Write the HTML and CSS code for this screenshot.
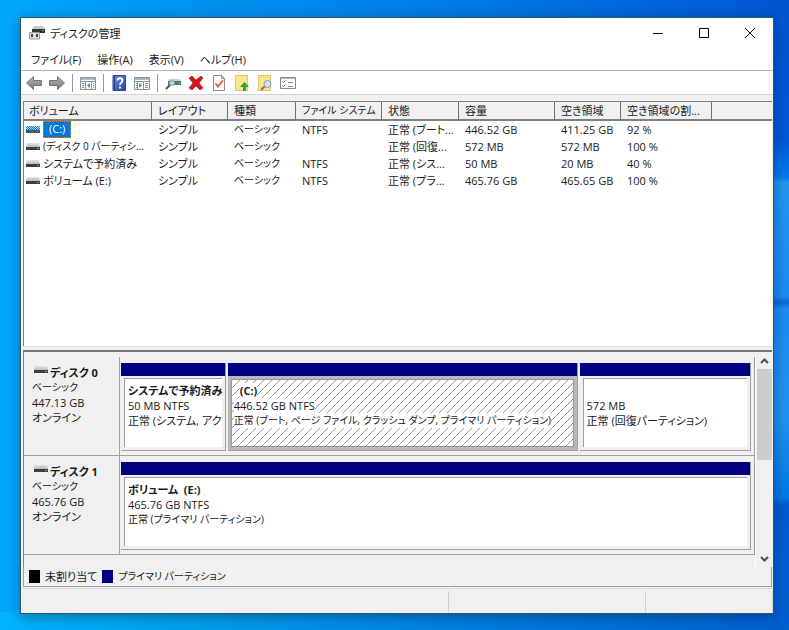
FILE: index.html
```html
<!DOCTYPE html>
<html lang="ja">
<head>
    <meta charset="UTF-8">
    <meta name="viewport" content="width=device-width, initial-scale=1.0">
    <title>ディスクの管理</title>
    <link rel="stylesheet" href="styles.css">
</head>
<body>
    <svg class="symbols" width="0" height="0" aria-hidden="true">
        <defs>
            <linearGradient id="lid" x1="0" y1="0" x2="0" y2="1">
                <stop offset="0" stop-color="#e4e4e4"/>
                <stop offset="1" stop-color="#b9b9b9"/>
            </linearGradient>
            <linearGradient id="steel" x1="0" y1="0" x2="0" y2="1">
                <stop offset="0" stop-color="#b5b5b5"/>
                <stop offset="1" stop-color="#777"/>
            </linearGradient>
            <linearGradient id="blue" x1="0" y1="0" x2="1" y2="1">
                <stop offset="0" stop-color="#6f8fe0"/>
                <stop offset="1" stop-color="#2743a8"/>
            </linearGradient>
            <pattern id="dots" width="2" height="2" patternUnits="userSpaceOnUse">
                <path d="M0 0h1v1h-1zM1 1h1v1h-1z" fill="#0078d7"/>
            </pattern>
        </defs>
        <symbol id="drive" viewBox="0 0 14 10">
            <path d="M1 1h12l1 4H0z" fill="url(#lid)"/>
            <rect y="5" width="14" height="3" fill="#3b3f3e"/>
            <rect x="11" y="6" width="2" height="1" fill="#35d04a"/>
        </symbol>
        <symbol id="back" viewBox="0 0 16 16">
            <path d="M.5 8L7.500 1.500v4h8v5h-8v4z" fill="url(#steel)" stroke="#777"/>
        </symbol>
    </svg>

    <div class="window">
        <header class="titlebar">
            <svg class="app-icon" width="16" height="16" viewBox="0 0 16 16">
                <path d="M5 1h9l2 3H3z" fill="#c9cccb"/>
                <rect x="3" y="4" width="13" height="4" fill="#303634"/>
                <rect x="13" y="5" width="2" height="1" fill="#3fce55"/>
                <path d="M.5 7.500h10v6.500h-10z" fill="#ddd" stroke="#999"/>
                <path d="M2 9h2v3H2zM7 9h2v3H7z" fill="#444"/>
            </svg>
            <h1>ディスクの管理</h1>
            <div class="window-buttons">
                <button type="button" aria-label="最小化"><svg width="10" height="10" viewBox="0 0 10 10"><path d="M0 5.500h10"/></svg></button>
                <button type="button" aria-label="最大化"><svg width="10" height="10" viewBox="0 0 10 10"><path d="M.5.500h9v9h-9z"/></svg></button>
                <button type="button" aria-label="閉じる"><svg width="10" height="10" viewBox="0 0 10 10"><path d="M0 0l10 10M10 0L0 10"/></svg></button>
            </div>
        </header>

        <nav class="menubar">
            <button type="button">ファイル(F)</button>
            <button type="button">操作(A)</button>
            <button type="button">表示(V)</button>
            <button type="button">ヘルプ(H)</button>
        </nav>

        <div class="toolbar">
            <button type="button" aria-label="戻る"><svg viewBox="0 0 16 16"><use href="#back"/></svg></button>
            <button type="button" aria-label="進む"><svg class="flip" viewBox="0 0 16 16"><use href="#back"/></svg></button>
            <span class="separator"></span>
            <button type="button" aria-label="コンソール ツリー">
                <svg viewBox="0 0 16 16">
                    <path d="M.5 2.500h15v12H.5z" fill="#fff" stroke="#8794a0"/>
                    <path d="M1 3h14v2H1z" fill="#aab7c4"/>
                    <path d="M1 6.500h14M5.500 7v7M11.500 7v7" stroke="#8794a0"/>
                    <path d="M2 8.500h2M2 10.500h2M2 12.500h2M13 8.500h1M13 10.500h1M13 12.500h1" stroke="#5d8dbc"/>
                    <path d="M10 8v5L7 10.500z" fill="#35a840"/>
                </svg>
            </button>
            <span class="separator"></span>
            <button type="button" aria-label="ヘルプ">
                <svg viewBox="0 0 16 16">
                    <path d="M2 .5h12.500v15H2z" fill="url(#blue)" stroke="#2c428e"/>
                    <path d="M3.500 1v14" stroke="#2c428e"/>
                    <path d="M6.500 5.500C6.500 2.500 11.500 2.500 11.500 5.500C11.500 7.500 9 7.500 9 10M9 11.500v2" fill="none" stroke="#fff" stroke-width="1.800"/>
                </svg>
            </button>
            <button type="button" aria-label="操作ウィンドウ">
                <svg viewBox="0 0 16 16">
                    <path d="M.5 2.500h15v12H.5z" fill="#fff" stroke="#8794a0"/>
                    <path d="M1 3h14v2H1z" fill="#aab7c4"/>
                    <path d="M1 6.500h14M3.500 7v7M9.500 7v7" stroke="#8794a0"/>
                    <path d="M2 8.500h1M2 10.500h1M2 12.500h1M11 8.500h3M11 10.500h3M11 12.500h3" stroke="#5d8dbc"/>
                    <path d="M5 8v5l3-2.500z" fill="#35a840"/>
                </svg>
            </button>
            <span class="separator"></span>
            <button type="button" aria-label="最新の情報に更新">
                <svg viewBox="0 0 16 16">
                    <path d="M4 4h10l2 2H3z" fill="#c5cfd0"/>
                    <path d="M3 6h13v4H3z" fill="#54707a"/>
                    <path d="M13 7h2v2h-2z" fill="#37c95c"/>
                    <circle cx="7" cy="8" r="2.500" fill="#bcd9e8" stroke="#8fa3ad"/>
                    <path d="M5 10l-4 4" stroke="#555" stroke-width="2"/>
                </svg>
            </button>
            <button type="button" aria-label="削除">
                <svg viewBox="0 0 16 16"><path d="M1 3l3-2 4 4 5-4 2 2-4 5 4 5-3 2-4-4-4 4-3-2 4-5z" fill="#d4151c" stroke="#9b0b10" stroke-width=".6"/></svg>
            </button>
            <button type="button" aria-label="プロパティ">
                <svg viewBox="0 0 16 16">
                    <path d="M2.500.500h8l3 3v12h-11z" fill="#fff" stroke="#8b8b8b"/>
                    <path d="M10.500.500v3h3" fill="none" stroke="#8b8b8b"/>
                    <path d="M4.500 8.500l2.500 3 5-6" fill="none" stroke="#e5582a" stroke-width="1.800"/>
                </svg>
            </button>
            <button type="button" aria-label="VHD の作成">
                <svg viewBox="0 0 16 16">
                    <path d="M1.500.500h12v15h-12z" fill="#fbe48b" stroke="#e3c566"/>
                    <path d="M9 16v-4H6l4.500-5 4.500 5h-3v4z" fill="#22b02c"/>
                </svg>
            </button>
            <button type="button" aria-label="VHD の接続">
                <svg viewBox="0 0 16 16">
                    <path d="M1.500.500h12v15h-12z" fill="#fbe48b" stroke="#e3c566"/>
                    <path d="M8 11l-4 4" stroke="#777" stroke-width="2"/>
                    <circle cx="10.500" cy="9" r="3.500" fill="#c9ebf8" stroke="#7b9fb0"/>
                </svg>
            </button>
            <button type="button" aria-label="一覧の設定">
                <svg viewBox="0 0 16 16">
                    <path d="M.5 2.500h15v11H.5z" fill="#fff" stroke="#808a93"/>
                    <path d="M1 3.500h14" stroke="#b5c0ca"/>
                    <path d="M2.500 6.500l1 1 2-2M2.500 10.500l1 1 2-2" fill="none" stroke="#2b80d5"/>
                    <path d="M8 7.500h5M8 11.500h5" stroke="#808a93"/>
                </svg>
            </button>
        </div>

        <main class="content">
            <div class="volume-list">
                <table>
                    <colgroup>
                        <col class="col-volume"><col class="col-layout"><col class="col-type">
                        <col class="col-fs"><col class="col-status"><col class="col-size">
                        <col class="col-free"><col class="col-percent"><col>
                    </colgroup>
                    <thead>
                        <tr>
                            <th>ボリューム</th><th>レイアウト</th><th>種類</th><th class="kana">ファイル システム</th><th>状態</th>
                            <th>容量</th><th>空き領域</th><th>空き領域の割...</th><th></th>
                        </tr>
                    </thead>
                    <tbody>
                        <tr>
                            <td><div class="volume"><svg class="drive" viewBox="0 0 14 10"><use href="#drive"/><rect y="1" width="14" height="7" fill="url(#dots)"/></svg><span class="selected">(C:)</span></div></td>
                            <td>シンプル</td><td class="kana">ベーシック</td><td>NTFS</td><td>正常 (ブート...</td>
                            <td>446.52 GB</td><td>411.25 GB</td><td>92 %</td><td></td>
                        </tr>
                        <tr>
                            <td><div class="volume kana"><svg class="drive" viewBox="0 0 14 10"><use href="#drive"/></svg><span>(ディスク 0 パーティシ...</span></div></td>
                            <td>シンプル</td><td class="kana">ベーシック</td><td></td><td>正常 (回復...</td>
                            <td>572 MB</td><td>572 MB</td><td>100 %</td><td></td>
                        </tr>
                        <tr>
                            <td><div class="volume"><svg class="drive" viewBox="0 0 14 10"><use href="#drive"/></svg><span>システムで予約済み</span></div></td>
                            <td>シンプル</td><td class="kana">ベーシック</td><td>NTFS</td><td>正常 (シス...</td>
                            <td>50 MB</td><td>20 MB</td><td>40 %</td><td></td>
                        </tr>
                        <tr>
                            <td><div class="volume"><svg class="drive" viewBox="0 0 14 10"><use href="#drive"/></svg><span>ボリューム (E:)</span></div></td>
                            <td>シンプル</td><td class="kana">ベーシック</td><td>NTFS</td><td>正常 (プラ...</td>
                            <td>465.76 GB</td><td>465.65 GB</td><td>100 %</td><td></td>
                        </tr>
                    </tbody>
                </table>
            </div>

            <div class="splitter"></div>

            <div class="disk-pane">
                <div class="disks">
                    <section class="disk">
                        <div class="disk-label">
                            <h2><svg class="drive" viewBox="0 0 14 10"><use href="#drive"/></svg>ディスク 0</h2>
                            <p class="kana">ベーシック</p>
                            <p>447.13 GB</p>
                            <p>オンライン</p>
                        </div>
                        <div class="partitions">
                            <div class="partition reserved">
                                <div class="stripe"></div>
                                <div class="details">
                                    <h3>システムで予約済み</h3>
                                    <p>50 MB NTFS</p>
                                    <p>正常 (システム, アク</p>
                                </div>
                            </div>
                            <div class="partition boot active">
                                <div class="stripe"></div>
                                <div class="details">
                                    <h3 class="letter"><span>(C:)</span></h3>
                                    <p><span>446.52 GB NTFS</span></p>
                                    <p class="kana"><span>正常 (ブート, ページ ファイル, クラッシュ ダンプ, プライマリ パーティション)</span></p>
                                </div>
                            </div>
                            <div class="partition recovery">
                                <div class="stripe"></div>
                                <div class="details">
                                    <h3></h3>
                                    <p>572 MB</p>
                                    <p>正常 (回復パーティション)</p>
                                </div>
                            </div>
                        </div>
                    </section>
                    <section class="disk">
                        <div class="disk-label">
                            <h2><svg class="drive" viewBox="0 0 14 10"><use href="#drive"/></svg>ディスク 1</h2>
                            <p class="kana">ベーシック</p>
                            <p>465.76 GB</p>
                            <p>オンライン</p>
                        </div>
                        <div class="partitions">
                            <div class="partition">
                                <div class="stripe"></div>
                                <div class="details">
                                    <h3>ボリューム&nbsp; (E:)</h3>
                                    <p>465.76 GB NTFS</p>
                                    <p class="kana">正常 (プライマリ パーティション)</p>
                                </div>
                            </div>
                        </div>
                    </section>
                </div>
                <div class="scrollbar">
                    <button type="button" aria-label="上へ"><svg width="9" height="6" viewBox="0 0 9 6"><path d="M1 5l3.500-3.500L8 5"/></svg></button>
                    <div class="thumb"></div>
                    <button type="button" class="down" aria-label="下へ"><svg width="9" height="6" viewBox="0 0 9 6"><path d="M1 1l3.500 3.500L8 1"/></svg></button>
                </div>
            </div>

            <div class="legend">
                <span class="swatch unallocated"></span><span>未割り当て</span>
                <span class="swatch primary"></span><span class="kana">プライマリ パーティション</span>
            </div>
        </main>

        <footer class="statusbar"><span></span><span></span><span></span></footer>
    </div>
</body>
</html>
```

FILE: styles.css
```css
* {
    box-sizing: border-box;
}
body {
    display: flex;
    min-height: 100vh;
    margin: 0;
    padding: 17px 15px 16px 20px;
    font-family: "Open Sans", "Noto Sans CJK JP", sans-serif;
    font-size: 11px;
    line-height: 15px;
    font-feature-settings: "palt";
    color: #1a1a1a;
    background:
        linear-gradient(180deg, #0056d0 0, #0058d8 22%, #0078ee 28%, #2496f0 29%, #1c8cf0 47%, #0a68d8 48%, #1c8cf0 49%, #2094f0 66%, #0078e4 79%, #005cd0 80%, #0060d0 100%) right / 16px 100% no-repeat,
        linear-gradient(90deg, #00b4fc, #00a0ec 25%, #007cdc 62%, #0060d0) bottom / 100% 18px no-repeat,
        linear-gradient(90deg, #00a8fa, #0090f0 28%, #0078e4 60%, #0056d0);
}
h1, h2, h3, p {
    margin: 0;
    font-size: inherit;
}
button {
    padding: 0;
    border: 0;
    background: none;
    font: inherit;
    font-feature-settings: inherit;
    color: inherit;
}
.symbols {
    position: absolute;
}
.kana {
    font-size: 10px;
}
.window {
    flex: 1;
    min-width: 0;
    display: flex;
    flex-direction: column;
    border: 1px solid #2b5674;
    background: #f0f0f0;
    box-shadow: 0 3px 12px rgba(0, 20, 60, 0.4);
}

/* title bar and menu */
.titlebar {
    display: flex;
    align-items: center;
    height: 30px;
    padding-left: 8px;
    background: #fff;
}
.titlebar h1 {
    flex: 1;
    margin-left: 5px;
    font-weight: normal;
}
.window-buttons {
    display: flex;
}
.window-buttons button {
    width: 46px;
    height: 30px;
}
.window-buttons path {
    fill: none;
    stroke: #000;
}
.menubar {
    display: flex;
    gap: 16px;
    height: 23px;
    padding-left: 10px;
    border-bottom: 1px solid #b4b4b4;
    background: #fff;
}

/* toolbar */
.toolbar {
    display: flex;
    align-items: center;
    gap: 7px;
    height: 24px;
    padding-left: 5px;
    border-bottom: 1px solid #d4d4d4;
    background: #fff;
}
.toolbar button,
.toolbar svg {
    display: block;
    width: 16px;
    height: 16px;
}
.toolbar .flip {
    transform: scaleX(-1);
}
.separator {
    width: 1px;
    height: 18px;
    background: #999;
}

.content {
    flex: 1;
    display: flex;
    flex-direction: column;
    margin: 6px 1px 0 2px;
}

/* volume list */
.volume-list {
    flex: 1;
    border-top: 1px solid #828282;
    border-left: 1px solid #828282;
    background: #fff;
}
table {
    width: 100%;
    table-layout: fixed;
    border-collapse: separate;
    border-spacing: 0;
}
.col-volume { width: 128px; }
.col-layout { width: 76px; }
.col-type { width: 68px; }
.col-fs { width: 86px; }
.col-status { width: 77px; }
.col-size { width: 96px; }
.col-free { width: 66px; }
.col-percent { width: 91px; }
th, td {
    padding: 0 0 0 6px;
    overflow: hidden;
    text-align: left;
    font-weight: normal;
    white-space: nowrap;
}
th {
    height: 19px;
    border-right: 1px solid #707070;
    border-bottom: 2px solid #808080;
    background: #f0f0f0;
}
th:first-child {
    padding-left: 5px;
}
th:last-child {
    border-right: 0;
}
td {
    height: 17px;
}
td:first-child {
    padding-left: 2px;
}
.volume {
    display: flex;
    align-items: center;
    gap: 3px;
}
.drive {
    flex: none;
    width: 14px;
    height: 10px;
}
.selected {
    height: 17px;
    padding: 0 6px;
    outline: 1px dotted #d98a3a;
    outline-offset: -1px;
    background: #0078d7;
    color: #fff;
}
.splitter {
    height: 6px;
    border-top: 1px solid #e0e0e0;
    border-bottom: 2px solid #777;
}

/* graphical view */
.disk-pane {
    display: flex;
    border-left: 1px solid #828282;
}
.disks {
    flex: 1;
    min-width: 0;
    padding: 5px 0 12px;
}
.disk {
    display: flex;
    height: 99px;
    border-bottom: 1px solid #a0a0a0;
}
.disk-label {
    width: 96px;
    padding: 8px 0 0 8px;
    border-right: 1px solid #a0a0a0;
}
.disk-label h2 {
    display: flex;
    gap: 2px;
    padding-left: 2px;
}
.partitions {
    flex: 1;
    min-width: 0;
    display: flex;
    gap: 2px;
    padding: 6px 3px 4px 1px;
    border-right: 1px solid #a0a0a0;
}
.partition {
    flex: 1;
    min-width: 0;
    display: flex;
    flex-direction: column;
    border-right: 1px solid #a0a0a0;
    border-bottom: 1px solid #a0a0a0;
}
.reserved { flex: 104; }
.boot { flex: 350; }
.recovery { flex: 171; }
.stripe {
    height: 13px;
    margin-bottom: 2px;
    background: #000080;
}
.details {
    flex: 1;
    margin: 0 3px 3px;
    padding: 4px 0 0 3px;
    overflow: hidden;
    border-top: 1px solid #a0a0a0;
    border-left: 1px solid #a0a0a0;
    background: #fff;
    white-space: nowrap;
}
.details h3 {
    min-height: 15px;
}
.active {
    background: #b8b8b8;
}
.active .stripe {
    margin-bottom: 3px;
}
.active .details {
    padding: 3px 0 0 2px;
    border: 1px solid #999;
    background: linear-gradient(135deg, #fff 46%, #999 46% 54%, #fff 54%) 0 0 / 8px 8px;
}
.active span {
    display: block;
    width: fit-content;
    background: #fff;
}
.letter {
    padding-left: 6px;
}

.scrollbar {
    display: flex;
    flex-direction: column;
    align-items: center;
    width: 17px;
    border-left: 1px solid #fff;
}
.scrollbar button {
    display: flex;
    align-items: center;
    justify-content: center;
    width: 16px;
    height: 17px;
}
.scrollbar path {
    fill: none;
    stroke: #505050;
    stroke-width: 2;
}
.scrollbar .down {
    margin-top: auto;
}
.thumb {
    width: 15px;
    height: 91px;
    background: #cdcdcd;
}

.legend {
    display: flex;
    align-items: center;
    gap: 5px;
    height: 20px;
    padding-left: 5px;
    border: solid #a0a0a0;
    border-width: 0 1px 1px;
}
.swatch {
    width: 11px;
    height: 13px;
}
.unallocated { background: #000; }
.primary { background: #000080; }

.statusbar {
    display: flex;
    height: 25px;
    margin-top: 1px;
    border-top: 1px solid #dadada;
}
.statusbar span {
    flex: 197;
    margin-top: 2px;
    border-right: 1px solid #d0d0d0;
}
.statusbar span:first-child {
    flex: 428;
}
.statusbar span:last-child {
    flex: 126;
}
```
